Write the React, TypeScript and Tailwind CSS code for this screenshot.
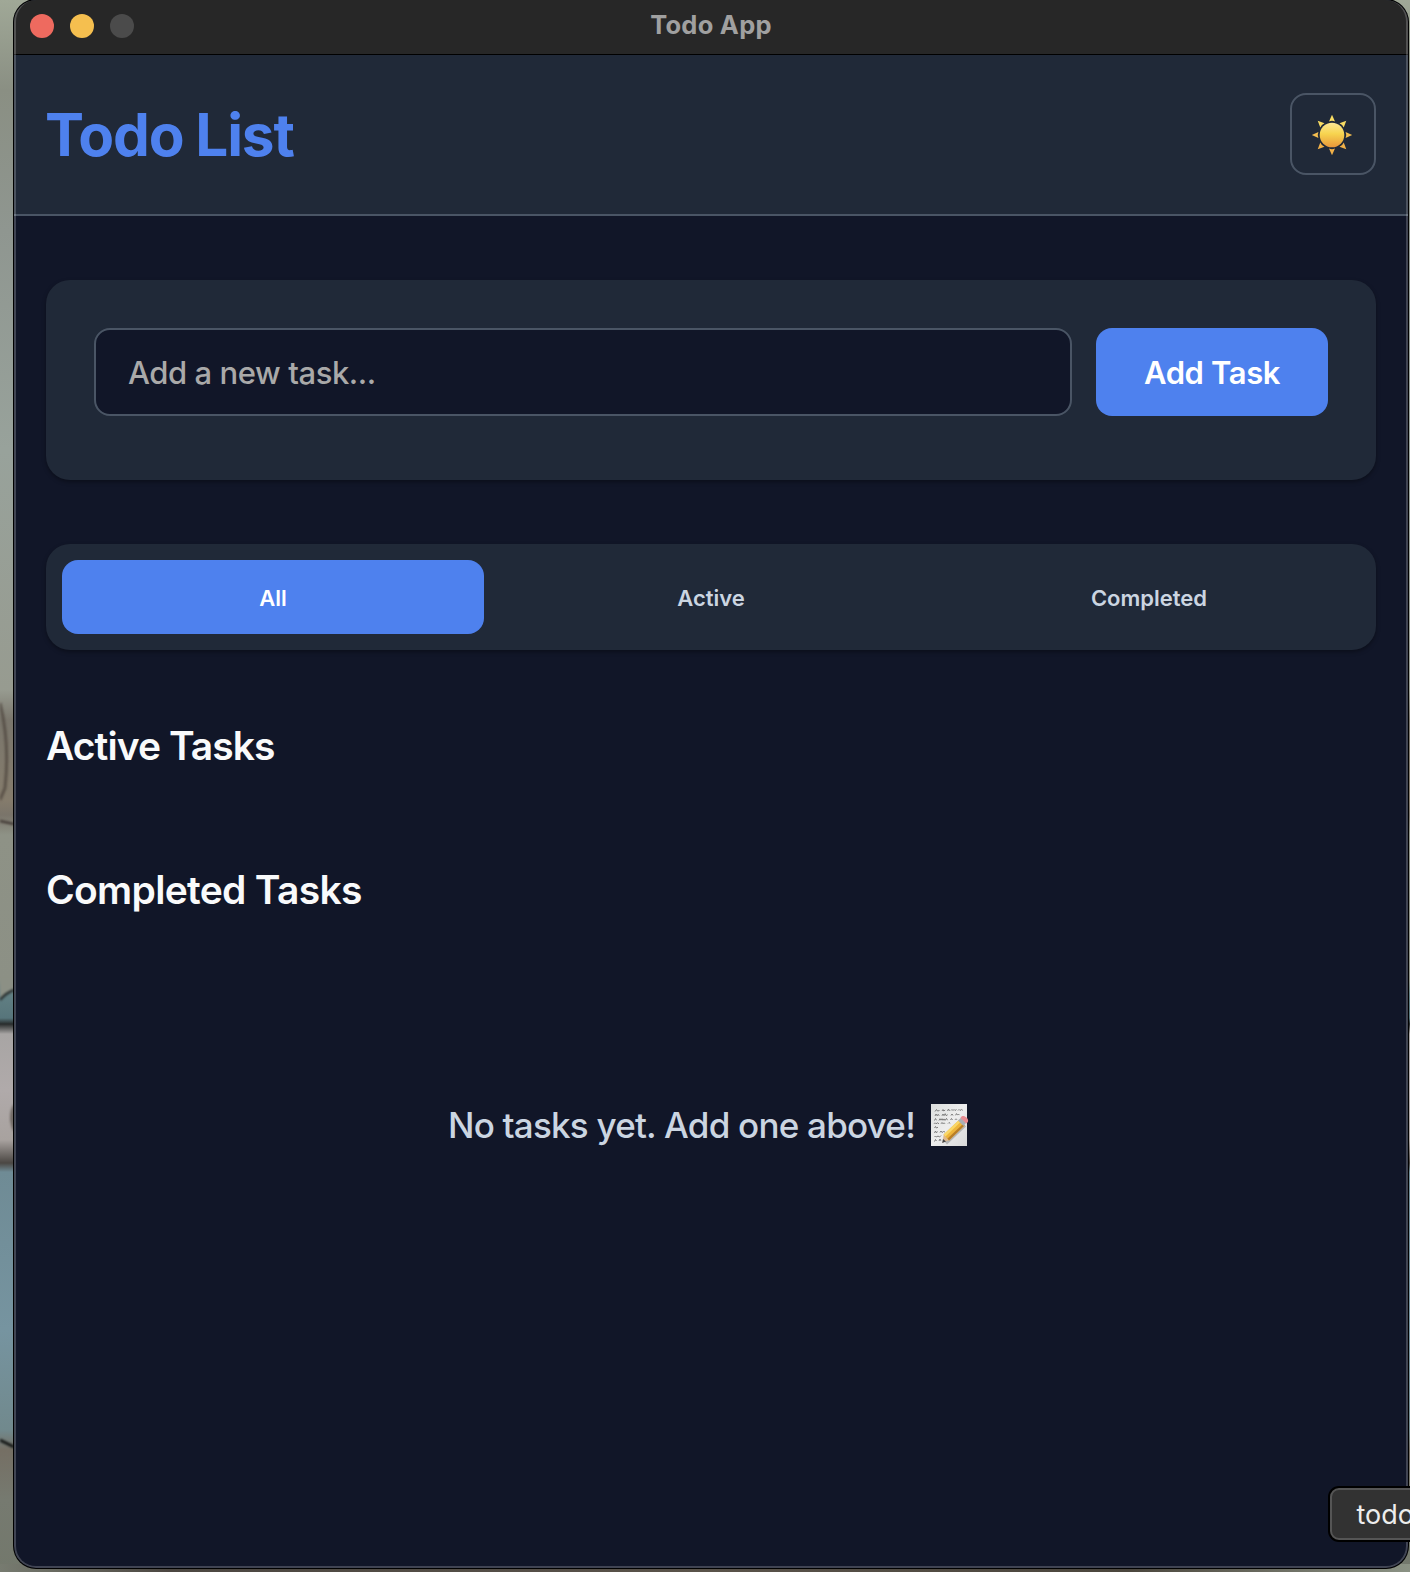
import React from "react";

function Sun() {
  return (
    <svg width="42" height="42" viewBox="0 0 42 42" className="relative top-px -left-px">
      <defs>
        <linearGradient id="sunDisc" x1="0" y1="0" x2="0" y2="1">
          <stop offset="0" stopColor="#fbe795" />
          <stop offset="0.45" stopColor="#f7d44f" />
          <stop offset="1" stopColor="#e8973a" />
        </linearGradient>
      </defs>
      {[0, 45, 90, 135, 180, 225, 270, 315].map((a) => (
        <path
          key={a}
          d="M21 0.8 L24 7.4 Q21 6.1 18 7.4 Z"
          transform={`rotate(${a} 21 21)`}
          fill={a > 90 && a < 270 ? "#f0b048" : a === 90 || a === 270 ? "#f2bd50" : "#f8dc63"}
        />
      ))}
      <circle cx="21" cy="21" r="12.300" fill="url(#sunDisc)" />
    </svg>
  );
}

function Memo() {
  return (
    <svg width="40" height="44" viewBox="0 0 40 44">
      <defs>
        <linearGradient id="paper" x1="0" y1="0" x2="1" y2="1">
          <stop offset="0" stopColor="#dcdedd" />
          <stop offset="0.5" stopColor="#eeeeee" />
          <stop offset="1" stopColor="#d9d9d9" />
        </linearGradient>
      </defs>
      <rect x="1" y="1" width="36" height="42" fill="url(#paper)" />
      <g fill="none" stroke="#707070" strokeWidth="0.9" strokeLinejoin="round">
        <path d="M5 8.500l1.500-2 1 1.500 2-.5M12 8l1-1.500.8 1.500 1.400-1M17.500 8l1-2 1 2M21 7.500l1-1 1 1 1-1 1 1 1.500-1M28 7.500l1-1 1 1 1.300-1 1.500.8" />
        <path d="M5 13l1-2 1.200 1.800 1-1.500 1 1.500M12 12.800l1-1.800 1 1.700 1.200-2 1 2 1.500-1M21 12.500l1-1.500 1 1.500M25.500 12.300l1-1.700 1 1.500 1-1 1 1" />
        <path d="M4.500 17.500l1-2 1 1.800M9 17.500l1-1.800 1 1.500 1-1.500 1 1.600 1-1.400 1 1.500 1.500-2 1 1.800M20.500 17l1-1.500 1 1.500M25 16.800l1-1 1 1" />
        <path d="M4 20.800l1-1 1 1 1.500-1 1.500 1M11 20.800l1-1.300 1 1.300 1-1 1 1M18 20.500l1-1 1.300 1" />
        <path d="M4.500 25l1-1.500 1 1.500 1.500-.8M4.500 30l1-2 1 1.800 1-1.300M10 29.500l1-1.500 1 1.500 1.500-1 1.500.5" />
        <path d="M4.500 34l1-1 1 1 1.500-1 1.500 1 1.500-1.500M4.500 38.500l1-2 1 1.500M9 38l1-2 .8 1.800" />
      </g>
      <path d="M14 38l3 3.500 19-18-4-4z" fill="#444" opacity="0.3" />
      <path d="M12.500 39.500l1.300-8.500 5.700 6z" fill="#dfb98d" />
      <path d="M12.200 40l0.800-4 3 2.600z" fill="#454545" />
      <path d="M13.600 31.500L29 17l5.500 5.500L19 37.500z" fill="#eeb53a" />
      <path d="M13.600 31.500L29 17l1.800 1.800L15.500 33.500z" fill="#f9d768" />
      <path d="M17.500 35.500L33 21l1.500 1.500L19 37.500z" fill="#b87e28" />
      <path d="M28 17.500l3-2.800 5 5.300-2.500 3z" fill="#a9afb3" />
      <path d="M30.500 15c1-3 4-2.500 6-0.500s2.500 4.500-0.500 6z" fill="#e98d92" />
    </svg>
  );
}

/* Soft brush strokes of the wallpaper, seen in the strip left of the window */
function WallpaperStrokes() {
  return (
    <svg width="14" height="1572" viewBox="0 0 14 1572" className="absolute top-0 left-0 blur-[1px]">
      <path d="M0 703q10 40 5 85l-5 12" fill="none" stroke="#4a423b" strokeWidth="3" opacity="0.7" />
      <path d="M0 821l14 3" stroke="#453d38" strokeWidth="2.500" />
      <path d="M0 978h14v11q-8 2-14 11z" fill="#8c9085" />
      <path d="M0 1000q6-7 14-10" fill="none" stroke="#2b3232" strokeWidth="2.500" />
      <path d="M14 1104q-4 4-4 15 1 9 4 13z" fill="#5f5751" opacity="0.8" />
      <path d="M0 1440l14 7" stroke="#151817" strokeWidth="3" />
    </svg>
  );
}

export default function App() {
  return (
    <div className="relative h-[1572px] w-[1410px] overflow-hidden pl-3.5 font-['Inter',sans-serif]">
      {/* Desktop wallpaper showing around the window */}
      <div className="absolute inset-0 bg-[linear-gradient(to_bottom,#a0a897_0px,#8a8f83_90px,#8f9690_230px,#98a29b_450px,#979b90_690px,#7a766c_720px,#857c6c_800px,#7a746a_815px,#8e9286_835px,#8c9085_980px,#617f83_995px,#57757b_1018px,#282c2c_1024px,#a8a5a4_1034px,#b0aaaa_1090px,#a8a29f_1140px,#4b4743_1163px,#6f8b95_1172px,#7694a0_1330px,#71898d_1430px,#756f64_1450px,#767a70_1500px,#73786c_1572px)]" />
      <WallpaperStrokes />
      <div className="absolute right-0 bottom-0 left-0 h-2 bg-[linear-gradient(to_right,#777b70,#4c4741_12%,#5a534a_50%,#4b463d_80%,#8b9284)]" />

      <div className="relative flex h-[1568px] w-[1394px] flex-col overflow-hidden rounded-[22px] bg-[#111628] shadow-[0_0_0_1px_#000]">
        <div className="flex h-[55px] shrink-0 items-center border-b border-black bg-[#272727] pl-4">
          <div className="relative -top-[1px] flex gap-4">
            <span className="size-6 rounded-full bg-[#ee6a5f]" />
            <span className="size-6 rounded-full bg-[#f5bf4f]" />
            <span className="size-6 rounded-full bg-[#4b4b4b]" />
          </div>
          <div className="relative -top-[2px] flex-1 pr-[120px] text-center text-[25.500px] font-bold tracking-[0.250px] text-[#a0a0a0]">
            Todo App
          </div>
        </div>

        <header className="flex h-[161px] shrink-0 items-center justify-between border-b-2 border-[#4a5565] bg-[#202938] px-8">
          <h1 className="relative top-px -left-px text-[58.500px] leading-none font-bold tracking-[-1.150px] [word-spacing:-1px] text-[#4e81ee]">
            Todo List
          </h1>
          <button className="relative -top-px flex h-[82px] w-[86px] items-center justify-center rounded-2xl border-2 border-[#4a5565]">
            <Sun />
          </button>
        </header>

        <main className="flex flex-1 flex-col px-8 pt-16">
          <section className="flex h-[200px] gap-6 rounded-3xl bg-[#202938] p-12 shadow-[0_2px_4px_rgba(0,0,0,0.35)]">
            <input
              placeholder="Add a new task..."
              className="h-[88px] w-[978px] rounded-2xl border-2 border-[#4a5565] bg-[#111628] px-8 text-[31px] font-[450] tracking-[-0.430px] outline-none placeholder:text-[#a9a9a9]"
            />
            <button className="h-[88px] flex-1 rounded-2xl bg-[#4e81ee] pt-0.5 text-[31px] font-semibold tracking-[-0.400px] text-white">
              Add Task
            </button>
          </section>

          <nav className="mt-16 grid h-[106px] grid-cols-3 gap-4 rounded-3xl bg-[#202938] p-4 text-[22px] font-semibold text-[#cbd5e1] shadow-[0_2px_4px_rgba(0,0,0,0.35)]">
            <button className="rounded-2xl bg-[#4e81ee] pt-0.5 text-white">All</button>
            <button className="pt-0.5">Active</button>
            <button className="pt-0.5">Completed</button>
          </nav>

          <h2 className="mt-[72px] text-[39px] leading-[48px] font-semibold tracking-[-0.950px] text-[#f9fafb]">
            Active Tasks
          </h2>
          <h2 className="mt-24 text-[39px] leading-[48px] font-semibold tracking-[-0.700px] text-[#f9fafb]">
            Completed Tasks
          </h2>

          <div className="mt-[186px] flex items-center justify-center pr-1 text-[35px] leading-[50px] font-[450] tracking-[-0.780px] text-[#cbd5e1]">
            <p>No tasks yet. Add one above!</p>
            <span className="ml-[15px]">
              <Memo />
            </span>
          </div>
        </main>

        <div className="pointer-events-none absolute inset-0 rounded-[22px] border-2 border-t-0 border-white/20" />
      </div>

      {/* Dock-style label overlapping the window corner */}
      <div className="absolute top-[1488px] left-[1330px] h-[52px] w-[120px] rounded-[9px] border-2 border-[#555] bg-[#323232] pl-[24.500px] text-[27px] leading-[50px] text-[#ededed] shadow-[0_0_0_2px_#000]">
        todo
      </div>
    </div>
  );
}
